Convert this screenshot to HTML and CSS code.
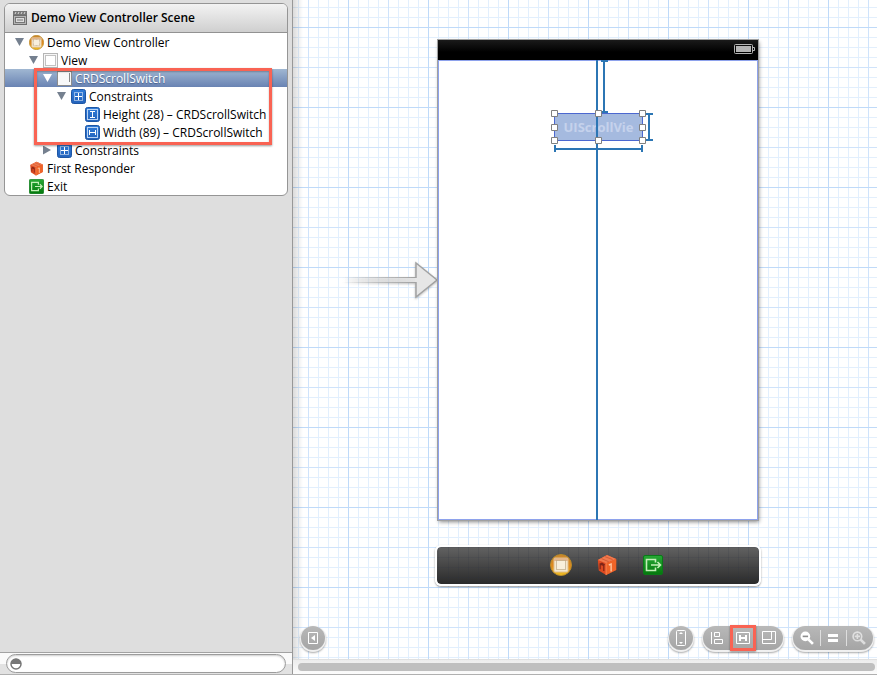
FILE: index.html
```html
<!DOCTYPE html>
<html lang="en">
<head>
<meta charset="utf-8">
<title>Demo View Controller Scene</title>
<link rel="stylesheet" href="styles.css">
</head>
<body>
<svg class="defs" aria-hidden="true">
  <defs>
    <linearGradient id="gold" x1="0" y1="0" x2="0" y2="1"><stop offset="0" stop-color="#c8862e"/><stop offset=".55" stop-color="#e08a20"/><stop offset="1" stop-color="#f0c020"/></linearGradient>
    <linearGradient id="blue" x1="0" y1="0" x2="0" y2="1"><stop offset="0" stop-color="#2f7bd8"/><stop offset="1" stop-color="#2463bb"/></linearGradient>
    <linearGradient id="green" x1="0" y1="0" x2="0" y2="1"><stop offset="0" stop-color="#27a835"/><stop offset="1" stop-color="#04780c"/></linearGradient>
    <linearGradient id="tail" x1="0" y1="0" x2="1" y2="0"><stop offset="0" stop-color="#999" stop-opacity="0"/><stop offset="1" stop-color="#a0a0a0"/></linearGradient>
    <linearGradient id="tailfill" x1="0" y1="0" x2="1" y2="0"><stop offset="0" stop-color="#ddd" stop-opacity="0"/><stop offset="1" stop-color="#e4e4e4"/></linearGradient>
    <symbol id="i-controller" viewBox="0 0 22 22">
      <circle cx="11" cy="11" r="10.5" fill="url(#gold)" stroke="#b98a28"/>
      <rect x="4" y="4" width="14" height="14" rx="1" fill="#f3e6cf" stroke="#e0c08c"/>
      <path d="M4 4h14v3H4z" fill="#e3b68c"/>
      <rect x="6.500" y="6.500" width="9" height="9" fill="#f8efdc" stroke="#a8916a" stroke-dasharray="1 1"/>
    </symbol>
    <symbol id="i-view" viewBox="0 0 15 15">
      <rect x=".5" y=".5" width="14" height="14" fill="#f6f6f6" stroke="#b5b5b5"/>
      <rect x="2.500" y="2.500" width="10" height="10" fill="#fff" stroke="#888" stroke-dasharray="1 1"/>
    </symbol>
    <symbol id="i-scroll" viewBox="0 0 15 15">
      <rect x=".5" y=".5" width="14" height="14" fill="#f8f8f8" stroke="#8c8c8c"/>
      <path d="M12.500 2v9" stroke="#888"/>
    </symbol>
    <symbol id="i-constraints" viewBox="0 0 15 15">
      <rect x=".5" y=".5" width="14" height="14" rx="2" fill="url(#blue)" stroke="#1e56a4"/>
      <rect x="3.500" y="3.500" width="8" height="8" fill="none" stroke="#fff" stroke-dasharray="1 1"/>
      <path d="M7.500 4v7M4 7.500h7" stroke="#fff"/>
    </symbol>
    <symbol id="i-height" viewBox="0 0 15 15">
      <rect x=".5" y=".5" width="14" height="14" rx="2" fill="url(#blue)" stroke="#1e56a4"/>
      <rect x="2.500" y="2.500" width="10" height="10" fill="none" stroke="#b9d3f4"/>
      <path d="M5 4.500h5M5 10.500h5M7.500 5v5" stroke="#fff" fill="none"/>
    </symbol>
    <symbol id="i-width" viewBox="0 0 15 15">
      <rect x=".5" y=".5" width="14" height="14" rx="2" fill="url(#blue)" stroke="#1e56a4"/>
      <rect x="2.500" y="2.500" width="10" height="10" fill="none" stroke="#b9d3f4"/>
      <path d="M4.500 5v5M10.500 5v5M5 7.500h5" stroke="#fff" fill="none"/>
    </symbol>
    <symbol id="i-cube" viewBox="0 0 22 24">
      <path d="M1 6.500 11 1l10 4.500v12L10 23 2 18z" fill="#dc4a20"/>
      <path d="M1 6.500 11 1l10 4.500L10 10z" fill="#f07a4e"/>
      <path d="M10 10 21 5.500v12L10 23z" fill="#ef6428"/>
      <path d="M10 10v13" stroke="#ff9260" stroke-width=".8"/>
      <path d="M3.500 16.500V11l4 1.500v6M3.500 11l2-1 3 2" fill="none" stroke="#7e2417" stroke-width="1.300"/>
      <path d="m13 12 2.500-1v8" fill="none" stroke="#ffc6a0" stroke-width="1.500"/>
      <path d="m5 5 8 3.500M9 3l8 3" stroke="#c9502c" stroke-width=".8"/>
    </symbol>
    <symbol id="i-exit" viewBox="0 0 20 20">
      <rect x=".5" y=".5" width="19" height="19" rx="1.500" fill="url(#green)" stroke="#0a7a18"/>
      <path d="M12.500 7.500v-3h-9v11h9v-3M8 10h9M14.500 7l3 3-3 3" fill="none" stroke="#c4efb8" stroke-width="1.600"/>
    </symbol>
  </defs>
</svg>

<div class="window">
  <aside class="sidebar">
    <div class="outline">
      <section class="scene">
        <header class="scene-head">
          <svg class="scene-icon" viewBox="0 0 14 14" aria-hidden="true">
            <path d="M0 0h14v4H0z" fill="#777"/><path d="m2 3 1-2m2 2 1-2m2 2 1-2m2 2 1-2" stroke="#ddd"/>
            <rect x=".5" y="4.500" width="13" height="9" fill="#b5b5b5" stroke="#6e6e6e"/>
            <rect x="2.500" y="6.500" width="9" height="5" fill="#ddd" stroke="#777"/><path d="M4 9h6" stroke="#777"/>
          </svg>
          <h1>Demo View Controller Scene</h1>
        </header>
        <ul class="tree">
          <li class="row level-0"><button class="twist open" aria-label="Collapse Demo View Controller"></button><svg class="icon"><use href="#i-controller"/></svg><span>Demo View Controller</span></li>
          <li class="row level-1"><button class="twist open" aria-label="Collapse View"></button><svg class="icon"><use href="#i-view"/></svg><span>View</span></li>
          <li class="row level-2 selected"><button class="twist open" aria-label="Collapse CRDScrollSwitch"></button><svg class="icon"><use href="#i-scroll"/></svg><span>CRDScrollSwitch</span></li>
          <li class="row level-3"><button class="twist open" aria-label="Collapse Constraints"></button><svg class="icon"><use href="#i-constraints"/></svg><span>Constraints</span></li>
          <li class="row level-4"><i class="twist"></i><svg class="icon"><use href="#i-height"/></svg><span>Height (28) – CRDScrollSwitch</span></li>
          <li class="row level-4"><i class="twist"></i><svg class="icon"><use href="#i-width"/></svg><span>Width (89) – CRDScrollSwitch</span></li>
          <li class="row level-2"><button class="twist closed" aria-label="Expand Constraints"></button><svg class="icon"><use href="#i-constraints"/></svg><span>Constraints</span></li>
          <li class="row level-0"><i class="twist"></i><svg class="icon"><use href="#i-cube"/></svg><span>First Responder</span></li>
          <li class="row level-0"><i class="twist"></i><svg class="icon"><use href="#i-exit"/></svg><span>Exit</span></li>
        </ul>
        <div class="tree-mark"></div>
      </section>
    </div>
    <footer class="filter">
      <label class="filter-box">
        <svg class="filter-icon" viewBox="0 0 12 12" aria-hidden="true"><circle cx="6" cy="6" r="5" fill="#fff" stroke="#777" stroke-width="1.500"/><path d="M.8 6a5.200 5.200 0 0 1 10.400 0z" fill="#777"/></svg>
        <input type="text" aria-label="Filter outline">
      </label>
    </footer>
  </aside>

  <main class="editor">
    <div class="canvas">
      <svg class="entry" viewBox="0 0 98 40" aria-hidden="true">
        <path d="M0 17h75v6H0z" fill="url(#tailfill)"/>
        <path d="M0 17h75v1H0zM0 22h75v1H0z" fill="url(#tail)"/>
        <path d="M74 3v34l21-17z" fill="#e6e6e6" stroke="#a2a2a2" stroke-width="1.500"/>
        <path d="M73 18h2v4h-2z" fill="#e6e6e6"/>
      </svg>

      <div class="phone">
        <div class="status">
          <svg class="battery" viewBox="0 0 21 10" aria-hidden="true"><rect x=".5" y=".5" width="18" height="9" rx="1" fill="none" stroke="#b4b4b4"/><path d="M2 2h15v6H2z" fill="#b4b4b4"/><path d="M19 3.500h1.500v3H19" fill="none" stroke="#b4b4b4"/></svg>
        </div>
        <div class="screen"></div>
        <div class="switch">UIScrollVie</div>
        <svg class="guides" viewBox="0 0 320 480" aria-hidden="true">
          <g fill="#2c76b4">
            <path d="M158 20h2v460h-2z"/>
            <path d="M165 20h2v53h-2zM163 20h7v2h-7zM163 71h7v2h-7z"/>
            <path d="M210 73h2v28h-2zM208 73h7v2h-7zM208 99h7v2h-7z"/>
            <path d="M116 108h89v2h-89zM116 105h2v7h-2zM203 105h2v7h-2z"/>
          </g>
          <g fill="#fff" stroke="#808080">
            <path d="M113.500 70.500h6v6h-6zM157.500 70.500h6v6h-6zM201.500 70.500h6v6h-6zM113.500 84.500h6v6h-6zM201.500 84.500h6v6h-6zM113.500 97.500h6v6h-6zM157.500 97.500h6v6h-6zM201.500 97.500h6v6h-6z"/>
          </g>
        </svg>
      </div>

      <div class="dock">
        <button aria-label="Demo View Controller"><svg class="dock-icon"><use href="#i-controller"/></svg></button>
        <button aria-label="First Responder"><svg class="dock-icon"><use href="#i-cube"/></svg></button>
        <button aria-label="Exit"><svg class="dock-icon exit"><use href="#i-exit"/></svg></button>
      </div>

      <div class="tools">
        <div class="pill round">
          <button aria-label="Hide document outline"><svg viewBox="0 0 12 14"><path d="M1.500 1.500h9v11h-9z" fill="none" stroke="#fff"/><path d="M8 4v6L4 7z" fill="#fff"/></svg></button>
        </div>
        <div class="pill round device">
          <button aria-label="Toggle form factor"><svg viewBox="0 0 12 18"><rect x="1.500" y="1.500" width="9" height="15" rx="1" fill="none" stroke="#fff"/><path d="M6 3 8 5H4zM6 15 8 13H4z" fill="#fff"/></svg></button>
        </div>
        <div class="pill">
          <button aria-label="Align"><svg viewBox="0 0 14 14"><path d="M1.500 1v12M4.500 1.500h5v4h-5zM4.500 8.500h8v4h-8z" fill="none" stroke="#fff"/></svg></button>
          <button class="marked" aria-label="Pin"><svg viewBox="0 0 14 14"><path d="M.5 1.500h13v11H.5z" fill="none" stroke="#fff"/><path d="M4 4v6M10 4v6M4 7h6" fill="none" stroke="#fff" stroke-width="2"/></svg></button>
          <button aria-label="Resizing behavior"><svg viewBox="0 0 14 14"><path d="M.5.5h13v12H.5zM9.500.5v8h-9" fill="none" stroke="#fff"/></svg></button>
        </div>
        <div class="pill">
          <button aria-label="Zoom out"><svg viewBox="0 0 13 13"><circle cx="5" cy="5" r="4.500" fill="#fff"/><path d="m8 8 4 4" stroke="#fff" stroke-width="2.500"/><path d="M2.500 5h5" stroke="#8d8d8d" stroke-width="1.500"/></svg></button>
          <button aria-label="Actual size"><svg viewBox="0 0 14 14"><path d="M2 3h10v3H2zM2 8h10v3H2z" fill="#fff"/></svg></button>
          <button aria-label="Zoom in"><svg class="faded" viewBox="0 0 13 13"><circle cx="5" cy="5" r="4" fill="none" stroke="#fff" stroke-width="1.500"/><path d="m8 8 4 4" stroke="#fff" stroke-width="2.500"/><path d="M2.500 5h5M5 2.500v5" stroke="#fff" stroke-width="1.500"/></svg></button>
        </div>
      </div>
    </div>
    <div class="scrollbar"><div class="thumb"></div></div>
  </main>
</div>
</body>
</html>
```
FILE: styles.css
```css
* { box-sizing: border-box; }
body { margin: 0; font: 12px/18px "Open Sans", "Noto Sans", sans-serif; color: #000; }
button { appearance: none; border: 0; padding: 0; margin: 0; background: none; }
.defs { position: absolute; width: 0; height: 0; }

.window { display: flex; height: 100vh; overflow: hidden; border-bottom: 1px solid #b0b0b0; }

/* Document outline */
.sidebar { display: flex; flex-direction: column; flex: none; width: 293px; background: #dedede; border-right: 1px solid #989898; }
.outline { flex: 1; padding: 3px 4px; }
.scene { position: relative; background: #fff; border: 1px solid #959595; border-radius: 6px; overflow: hidden; }
.scene-head { display: flex; align-items: center; gap: 4px; height: 29px; padding: 0 8px; background: linear-gradient(#f3f3f3, #cfcfcf); border-bottom: 1px solid #929292; }
.scene-icon { width: 14px; height: 14px; }
.scene-head h1 { margin: 0; font-size: 12px; line-height: 18px; font-weight: 600; }
.tree { list-style: none; margin: 0; padding: 0; }
.row { display: flex; align-items: center; height: 18px; white-space: nowrap; }
.row span { margin-left: 3px; padding-top: 1px; }
.level-0 { padding-left: 9px; }
.level-1 { padding-left: 23px; }
.level-2 { padding-left: 37px; }
.level-3 { padding-left: 51px; }
.level-4 { padding-left: 65px; }
.selected { color: #fff; background: linear-gradient(#a0b7d2, #6983b3); text-shadow: 0 1px 1px #47608c; }
.icon { flex: none; width: 15px; height: 15px; margin-left: 1px; }
.twist { flex: none; width: 14px; height: 18px; display: grid; place-content: center start; }
.twist.open::before, .twist.closed::before { content: ""; width: 9px; height: 8px; margin-left: 1px; background: #75808f; clip-path: polygon(0 0, 100% 0, 50% 100%); }
.twist.closed::before { width: 8px; height: 9px; clip-path: polygon(0 0, 100% 50%, 0 100%); }
.selected .twist::before { background: #fff; }
.tree-mark { position: absolute; left: 29px; right: 15px; top: 64px; height: 77px; border: 3px solid #f96353; box-shadow: 0 1px 2px #0006, inset 0 1px 2px #0004; }

.filter { height: 22px; padding: 1px 6px; background: linear-gradient(#fafafa 50%, #e2e2e2 50%); border-top: 1px solid #a2a2a2; }
.filter-box { display: flex; align-items: center; gap: 4px; height: 19px; padding: 0 3px; background: #fff; border: 1px solid #9c9c9c; border-radius: 10px; box-shadow: inset 0 1px 2px #0003; }
.filter-icon { width: 12px; height: 12px; }
.filter-box input { flex: 1; min-width: 0; border: 0; padding: 0; background: none; outline: 0; font: inherit; }

/* Storyboard canvas */
.editor { flex: 1; min-width: 0; display: flex; flex-direction: column; }
.canvas {
  position: relative; flex: 1; overflow: hidden; background:
    linear-gradient(90deg, #00000024, #0000 10px),
    linear-gradient(90deg, #bfdaf9 1px, #0000 1px) 55px 0 / 80px 80px,
    linear-gradient(#bfdaf9 1px, #0000 1px) 0 27px / 80px 80px,
    linear-gradient(90deg, #cfe3fb 1px, #0000 1px) 15px 0 / 40px 40px,
    linear-gradient(#cfe3fb 1px, #0000 1px) 0 27px / 40px 40px,
    linear-gradient(90deg, #e2effd 1px, #0000 1px) 5px 0 / 10px 10px,
    linear-gradient(#e2effd 1px, #0000 1px) 0 7px / 10px 10px,
    #fff;
}
.entry { position: absolute; left: 49px; top: 260px; width: 98px; height: 40px; filter: drop-shadow(0 1px 1px #0004); }
.phone { position: absolute; left: 145px; top: 40px; width: 320px; height: 480px; display: flex; flex-direction: column; background: #fff; box-shadow: 0 0 0 1px #a0a0a0, 1px 2px 4px #0007; }
.status { display: flex; align-items: center; justify-content: flex-end; height: 20px; padding: 0 3px 2px; background: linear-gradient(#1a1a1a, #000 60%); }
.battery { width: 21px; height: 10px; }
.screen { flex: 1; border: 1px solid #8ea2ec; }
.switch { position: absolute; left: 116px; top: 73px; width: 89px; height: 28px; border: 1px solid #4c68d0; background: #a5badf; color: #c5d2ec; font-weight: 700; font-size: 13px; line-height: 27px; text-align: center; }
.guides { position: absolute; left: 0; top: 0; width: 320px; height: 480px; }
.dock { position: absolute; left: 142px; top: 545px; width: 326px; height: 41px; display: flex; align-items: center; justify-content: center; gap: 24px; padding: 0 0 2px 18px; border: 2px solid #fff; border-radius: 6px; box-shadow: 0 1px 2px #0006;
  background:
    linear-gradient(90deg, #29324426 1px, #0000 1px) 1px 0 / 10px 10px padding-box,
    linear-gradient(#29324426 1px, #0000 1px) 0 0 / 10px 10px padding-box,
    linear-gradient(#626262, #2a2a2a) padding-box; }
.dock button { display: grid; place-content: center; }
.dock-icon { width: 22px; height: 22px; }
.dock-icon.exit { height: 20px; }

/* Floating controls */
.tools { position: absolute; left: 8px; right: 4px; bottom: 9px; display: flex; gap: 10px; }
.pill { display: flex; align-items: center; height: 24px; padding: 0 1px; border-radius: 12px; background: linear-gradient(#b8b8b8, #a5a5a5); box-shadow: 0 1px 0 1px #f0f0f0, 0 2px 2px 1px #0005; }
.pill button { display: grid; place-content: center; width: 26px; height: 24px; }
.pill button + button { background: linear-gradient(#dedede, #dedede) 0 50% / 1px 16px no-repeat; }
.pill svg { width: 14px; height: 14px; }
.pill.round { padding: 0; }
.round button { width: 24px; }
.device { margin-left: auto; }
.pill.device svg { width: 12px; height: 18px; }
.pill .marked, .pill .marked + button { background: none; }
.pill .marked { height: 26px; border: 3px solid #f96353; box-shadow: 0 1px 2px #0006; }
.faded { opacity: .6; }
.scrollbar { height: 15px; padding: 3px 2px 3px 5px; background: linear-gradient(#ececec, #fcfcfc); border-top: 1px solid #e0e0e0; }
.thumb { height: 8px; border-radius: 4px; background: #bfbfbf; }
```
